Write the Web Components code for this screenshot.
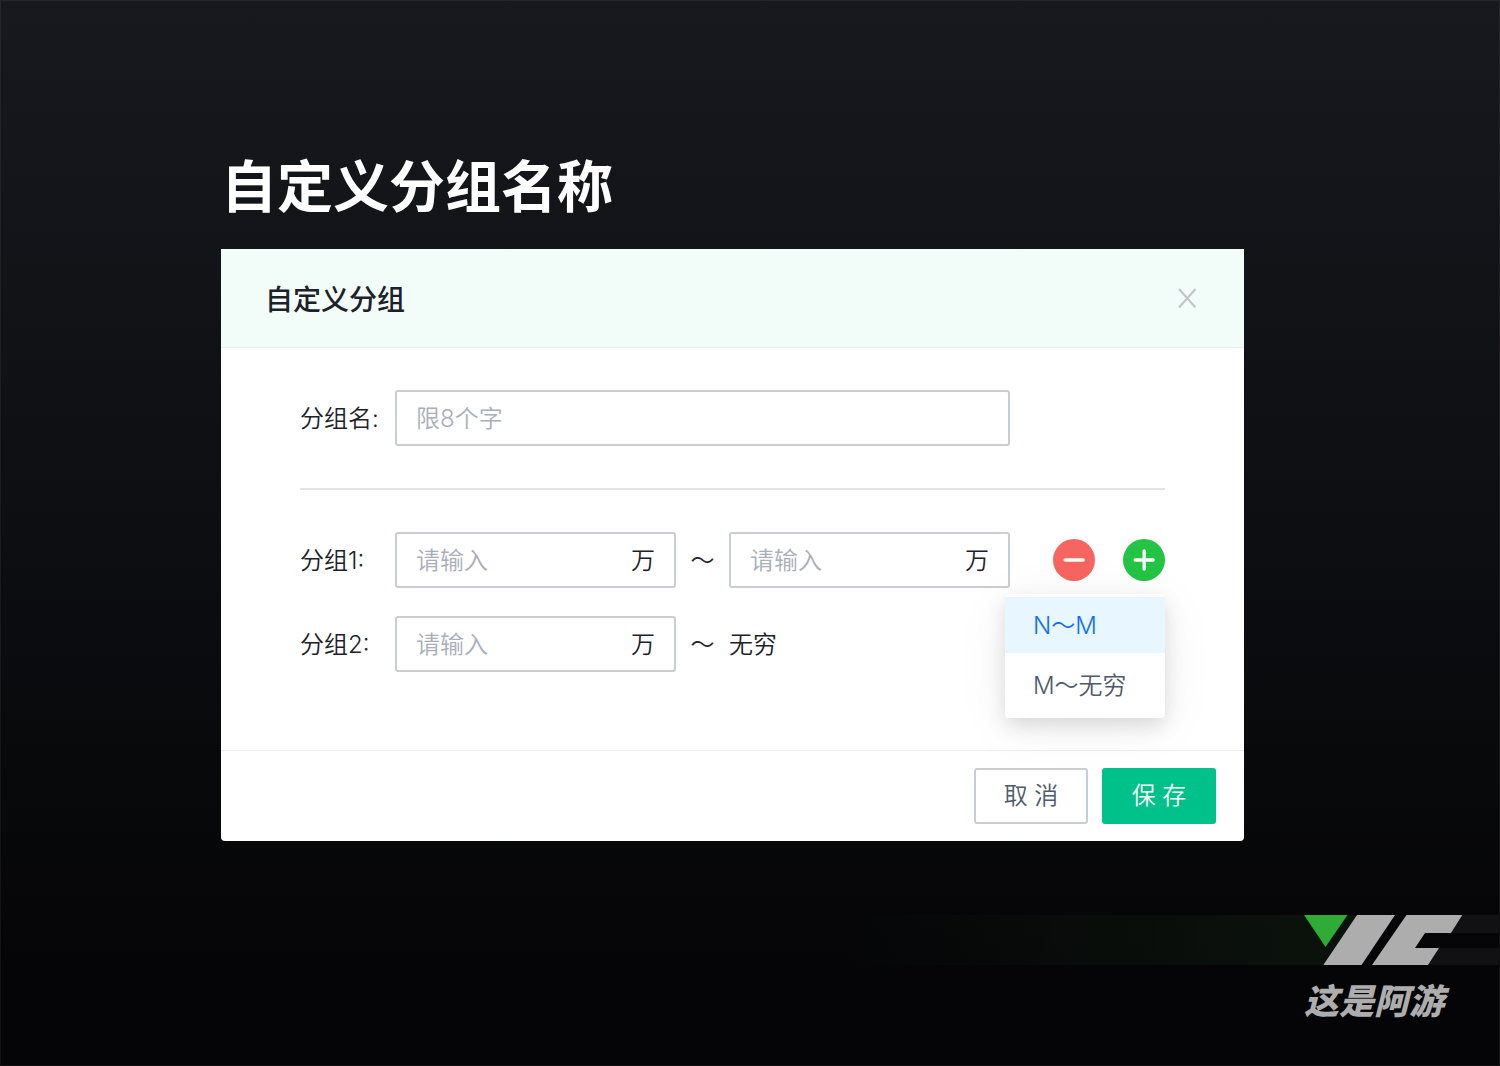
<!DOCTYPE html>
<html lang="zh-CN">
<head>
<meta charset="utf-8">
<meta name="viewport" content="width=device-width, initial-scale=1">
<title>自定义分组名称</title>
<style>
  body {
    margin: 0;
    font-family: Inter, "Noto Sans CJK SC", sans-serif;
    font-size: 24px;
    line-height: 36px;
    font-weight: 350;
    color: #1d2129;
  }
</style>
</head>
<body>
<app-stage>
  <h1 slot="title">自定义分组名称</h1>
  <group-dialog heading="自定义分组">
    <name-row label="分组名:" placeholder="限8个字"></name-row>
    <hr>
    <range-row label="分组1:" unit="万">
      <round-button slot="actions" kind="remove"></round-button>
      <add-menu slot="actions"></add-menu>
    </range-row>
    <range-row label="分组2:" unit="万" end="无穷"></range-row>
    <action-button slot="footer">取 消</action-button>
    <action-button slot="footer" primary>保 存</action-button>
  </group-dialog>
  <brand-mark slot="brand">这是阿游</brand-mark>
</app-stage>

<script>
// shared by every row with a label and text boxes
const ROW_STYLE = `
  :host {
    display: grid;
    grid-template-columns: 95px 1fr 53px 1fr 155px;
    align-items: center;
  }
  * {
    box-sizing: border-box;
  }
  label,
  span {
    padding-top: 2px;
  }
  input {
    width: 100%;
    height: 56px;
    padding: 0 19px;
    border: 2px solid #c9cdd4;
    border-radius: 3px;
    background: #fff;
    font: inherit;
    color: inherit;
    outline: none;
  }
  input:focus {
    border-color: #00c18a;
  }
  input::placeholder {
    color: #a9aeb8;
    opacity: 1;
  }
`

class AppStage extends HTMLElement {
  constructor() {
    super()
    this.attachShadow({ mode: 'open' })
    this.shadowRoot.innerHTML = `
      <style>
        :host {
          display: flex;
          flex-direction: column;
          box-sizing: border-box;
          min-height: 100vh;
          padding-top: 145px;
          background: linear-gradient(#18191e, #0c0d10 55%, #050507 90%);
          box-shadow: inset 0 0 0 1px rgba(255, 255, 255, 0.06);
        }
        main {
          padding: 0 256px 0 221px;
        }
        ::slotted(h1) {
          margin: 0 0 20px;
          font-size: 56px;
          line-height: 84px;
          font-weight: 700;
          color: #fff;
        }
        footer {
          margin-top: auto;
          padding: 40px 0 41px;
        }
      </style>
      <main>
        <slot name="title"></slot>
        <slot></slot>
      </main>
      <footer><slot name="brand"></slot></footer>
    `
  }
}

class GroupDialog extends HTMLElement {
  constructor() {
    super()
    this.attachShadow({ mode: 'open' })
    this.shadowRoot.innerHTML = `
      <style>
        :host {
          display: block;
          background: #fff;
          border-radius: 0 0 4px 4px;
        }
        header {
          display: flex;
          align-items: center;
          justify-content: space-between;
          padding: 28px 44px;
          background: #f2fcf9;
          border-bottom: 1px solid #ebeff0;
        }
        h2 {
          margin: 0;
          padding-top: 4px;
          font-size: 28px;
          line-height: 38px;
          font-weight: 500;
        }
        .close {
          display: flex;
          padding: 0;
          border: 0;
          background: none;
          color: #bfc5ca;
          cursor: pointer;
        }
        .body {
          display: flex;
          flex-direction: column;
          gap: 28px;
          padding: 42px 79px 78px;
        }
        ::slotted(hr) {
          width: 100%;
          height: 2px;
          margin: 14px 0;
          border: 0;
          background: #e1e3e6;
        }
        footer {
          display: flex;
          justify-content: flex-end;
          gap: 14px;
          padding: 17px 28px;
          border-top: 1px solid #eceef1;
        }
      </style>
      <header>
        <h2></h2>
        <button class="close" type="button" aria-label="关闭">
          <svg width="24" height="24" viewBox="0 0 24 24" fill="none" stroke="currentColor" stroke-width="2">
            <path d="M3 3 19.500 21.500M19.500 3 3 21.500"/>
          </svg>
        </button>
      </header>
      <div class="body"><slot></slot></div>
      <footer><slot name="footer"></slot></footer>
    `
  }

  connectedCallback() {
    this.shadowRoot.querySelector('h2').textContent = this.getAttribute('heading')
    this.shadowRoot.querySelector('.close').addEventListener('click', () => {
      this.style.display = 'none'
    })
  }
}

class NameRow extends HTMLElement {
  constructor() {
    super()
    this.attachShadow({ mode: 'open' })
    this.shadowRoot.innerHTML = `
      <style>
        ${ROW_STYLE}
        input {
          grid-column: 2 / 5;
        }
      </style>
      <label for="name"></label>
      <input id="name" type="text" maxlength="8">
    `
  }

  connectedCallback() {
    this.shadowRoot.querySelector('label').textContent = this.getAttribute('label')
    this.shadowRoot.querySelector('input').placeholder = this.getAttribute('placeholder')
  }
}

class RangeRow extends HTMLElement {
  constructor() {
    super()
    this.attachShadow({ mode: 'open' })
  }

  connectedCallback() {
    const label = this.getAttribute('label')
    const unit = this.getAttribute('unit')
    const end = this.getAttribute('end')
    // an open range has a word where its upper box would be
    this.shadowRoot.innerHTML = `
      <style>
        ${ROW_STYLE}
        .box {
          display: grid;
          grid-template-columns: 1fr 45px;
          align-items: center;
        }
        .box input {
          grid-area: 1 / 1 / 2 / 3;
          padding-right: 52px;
        }
        .unit {
          grid-area: 1 / 2;
          z-index: 1;
        }
        .tilde {
          text-align: center;
        }
        .actions {
          display: flex;
          justify-content: flex-end;
          gap: 28px;
        }
      </style>
      <label for="from">${label}</label>
      <div class="box">
        <input id="from" type="text" placeholder="请输入">
        <span class="unit">${unit}</span>
      </div>
      <span class="tilde">～</span>
      ${end ? `<span>${end}</span>` : `
      <div class="box">
        <input type="text" placeholder="请输入" aria-label="${label}">
        <span class="unit">${unit}</span>
      </div>`}
      <div class="actions"><slot name="actions"></slot></div>
    `
  }
}

class RoundButton extends HTMLElement {
  constructor() {
    super()
    this.attachShadow({ mode: 'open' })
  }

  connectedCallback() {
    const add = this.getAttribute('kind') === 'add'
    this.shadowRoot.innerHTML = `
      <style>
        :host {
          display: block;
        }
        button {
          display: flex;
          padding: 0;
          border: 0;
          border-radius: 50%;
          background: ${add ? '#23c343' : '#f76560'};
          color: #fff;
          cursor: pointer;
        }
      </style>
      <button type="button" aria-label="${add ? '添加' : '删除'}">
        <svg width="42" height="42" viewBox="0 0 42 42" stroke="currentColor" stroke-width="3.4" stroke-linecap="round">
          <path d="M12.2 21H30.2${add ? 'M21.2 12V30' : ''}"/>
        </svg>
      </button>
    `
  }
}

class AddMenu extends HTMLElement {
  constructor() {
    super()
    this.attachShadow({ mode: 'open' })
    this.shadowRoot.innerHTML = `
      <style>
        :host {
          display: block;
          position: relative;
        }
        .menu {
          position: absolute;
          top: 100%;
          right: 0;
          z-index: 2;
          display: flex;
          flex-direction: column;
          gap: 4px;
          width: 160px;
          margin-top: 13px;
          padding: 3px 0 5px;
          border-radius: 4px;
          background: #fff;
          box-shadow: 0 8px 20px rgba(0, 0, 0, 0.12), 0 8px 56px rgba(0, 0, 0, 0.06);
        }
        .menu[hidden] {
          display: none;
        }
        .menu button {
          height: 56px;
          padding: 2px 28px 0;
          border: 0;
          background: none;
          font: inherit;
          color: #4e5969;
          text-align: left;
          white-space: nowrap;
          cursor: pointer;
        }
        .menu button.active {
          background: #e8f6ff;
          color: #0f6ff0;
        }
      </style>
      <round-button kind="add"></round-button>
      <div class="menu" role="menu">
        <button class="active" type="button" role="menuitem">N～M</button>
        <button type="button" role="menuitem">M～无穷</button>
      </div>
    `
  }

  connectedCallback() {
    const menu = this.shadowRoot.querySelector('.menu')
    this.shadowRoot.querySelector('round-button').addEventListener('click', () => {
      menu.hidden = !menu.hidden
    })
    menu.addEventListener('click', (e) => {
      if (e.target === menu) {
        return
      }
      menu.querySelector('.active').classList.remove('active')
      e.target.classList.add('active')
    })
  }
}

class ActionButton extends HTMLElement {
  constructor() {
    super()
    this.attachShadow({ mode: 'open' })
    this.shadowRoot.innerHTML = `
      <style>
        :host {
          display: block;
        }
        button {
          min-width: 114px;
          height: 56px;
          padding: 0 20px;
          border: 2px solid #c9cdd4;
          border-radius: 3px;
          background: #fff;
          font: inherit;
          color: #4e5969;
          cursor: pointer;
        }
        :host([primary]) button {
          border-color: #00c18a;
          background: #00c18a;
          color: #fff;
        }
      </style>
      <button type="button"><slot></slot></button>
    `
  }
}

class BrandMark extends HTMLElement {
  constructor() {
    super()
    this.attachShadow({ mode: 'open' })
    this.shadowRoot.innerHTML = `
      <style>
        :host {
          display: grid;
          grid-template-columns: 1fr 196px;
          row-gap: 12px;
          color: #adadad;
        }
        .trail {
          background: linear-gradient(90deg, transparent 65%, #0b120c);
        }
        svg {
          display: block;
        }
        .name {
          grid-column: 2;
          font-size: 35px;
          line-height: 48px;
          font-weight: 900;
          font-style: italic;
          white-space: nowrap;
        }
      </style>
      <div class="trail"></div>
      <svg width="196" height="50" viewBox="0 0 196 50" aria-hidden="true">
        <path fill="#0b120c" d="M0 0H53L19 50H0z"/>
        <path fill="#111113" d="M158 0H196V18H147zM135 33H196V50H124z"/>
        <path fill="#2eac35" d="M0 0H43.5L21.5 32z"/>
        <path fill="#adadad" d="M53 0H91L57.500 50H19.300z"/>
        <path fill="#adadad" d="M102.500 0H158.300L147 18H121L111 33H135L124 50H68z"/>
      </svg>
      <div class="name"><slot></slot></div>
    `
  }
}

customElements.define('app-stage', AppStage)
customElements.define('group-dialog', GroupDialog)
customElements.define('name-row', NameRow)
customElements.define('range-row', RangeRow)
customElements.define('round-button', RoundButton)
customElements.define('add-menu', AddMenu)
customElements.define('action-button', ActionButton)
customElements.define('brand-mark', BrandMark)
</script>
</body>
</html>
